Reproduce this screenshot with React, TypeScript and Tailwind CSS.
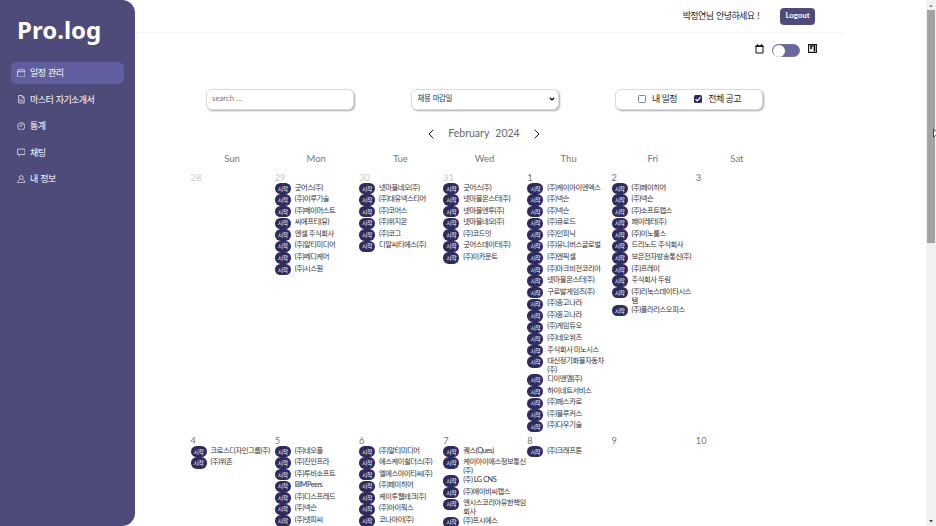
import React from "react";

const KR = "font-['Lato','Noto_Sans_CJK_KR',sans-serif]";

type Day = { date: string; muted?: boolean; events: string[] };

const weeks: Day[][] = [
  [
    { date: "28", muted: true, events: [] },
    { date: "29", muted: true, events: ["굿어스(주)", "(주)이루기술", "(주)메이머스트", "씨에프티(유)", "엔셀 주식회사", "(주)알티미디어", "(주)메디케어", "(주)시스원"] },
    { date: "30", muted: true, events: ["넷마블네오(주)", "(주)대유넥스티어", "(주)코어스", "(주)위지온", "(주)코그", "디알씨티에스(주)"] },
    { date: "31", muted: true, events: ["굿어스(주)", "넷마블몬스터(주)", "넷마블엔투(주)", "넷마블네오(주)", "(주)코드잇", "굿어스데이터(주)", "(주)이카운트"] },
    {
      date: "1",
      events: ["(주)케이아이엔엑스", "(주)넥슨", "(주)넥슨", "(주)큐로드", "(주)인피닉", "(주)유니버스글로벌", "(주)엔픽셀", "(주)마크비전코리아", "넷마블몬스터(주)", "구로발게임즈(주)", "(주)중고나라", "(주)중고나라", "(주)게임듀오", "(주)네오위즈", "주식회사 미노시스", "대신정기화물자동차\n(주)", "디이앤엠(주)", "하이네트서비스", "(주)패스카로", "(주)블루커스", "(주)다우기술"],
    },
    {
      date: "2",
      events: ["(주)페이히어", "(주)넥슨", "(주)소프트랩스", "페이레터(주)", "(주)이노룰스", "드리노드 주식회사", "보은전자방송통신(주)", "(주)프레이", "주식회사 두림", "(주)리눅스데이타시스\n템", "(주)폴라리스오피스"],
    },
    { date: "3", events: [] },
  ],
  [
    { date: "4", events: ["크로스디자인그룹(주)", "(주)위존"] },
    { date: "5", events: ["(주)네오플", "(주)진인프라", "(주)투비소프트", "BIMPeers", "(주)디스프레드", "(주)넥슨", "(주)넷피씨"] },
    { date: "6", events: ["(주)알티미디어", "에스케이쉴더스(주)", "엘에스아이티씨(주)", "(주)페이히어", "케이투웹테크(주)", "(주)아이웍스", "코나아이(주)"] },
    { date: "7", events: ["퀘스(Ques)", "케이아이에스정보통신\n(주)", "(주) LG CNS", "(주)에이비씨랩스", "앤시스코리아유한책임\n회사", "(주)프시에스"] },
    { date: "8", events: ["(주)크래프톤"] },
    { date: "9", events: [] },
    { date: "10", events: [] },
  ],
];

const iconProps = {
  viewBox: "0 0 16 16",
  fill: "none",
  stroke: "currentColor",
  strokeWidth: 1.3,
  className: "size-[8.500px] shrink-0",
};

const menu = [
  { label: "일정 관리", icon: <svg {...iconProps}><rect x="1" y="1.5" width="14" height="13.500" rx="2" /><path d="M1 5h14" /></svg> },
  { label: "마스터 자기소개서", icon: <svg {...iconProps}><path d="M9.5 1H3v14h10.5V5zM9.5 1v4h4M5.8 12V7M8.3 12V9M10.8 12v-2" /></svg> },
  { label: "통계", icon: <svg {...iconProps}><circle cx="8" cy="8" r="6.8" /><path d="M8 3v5l4.500-4.500M8 8H4" strokeWidth="1" /></svg> },
  { label: "채팅", icon: <svg {...iconProps}><path d="M1.2 2h13.6v10.2H7l-3 2.8v-2.8H1.2z" /></svg> },
  { label: "내 정보", icon: <svg {...iconProps}><circle cx="8" cy="4.8" r="3.6" /><path d="M4.8 8.5C2.5 9.8 1.6 12 1.5 14.5h13c-.1-2.500-1-4.700-3.300-6" /></svg> },
];

function Sidebar() {
  return (
    <aside className="h-full w-[135px] shrink-0 rounded-r-[13px] bg-[#4e4a79] px-[11px] pt-[16px] text-white">
      <div className="h-[46px] pl-[6px] font-['Noto_Sans','Open_Sans',sans-serif] text-[24px] leading-[28px] font-bold">Pro.log</div>
      <nav className="flex flex-col gap-[4.5px]">
        {menu.map((m, i) => (
          <div key={m.label} className={`flex h-[22px] items-center gap-[5px] rounded-[6px] pl-[5.500px] text-[9px] tracking-[-0.55px] whitespace-nowrap ${i === 0 ? "bg-[#605e9e]" : ""}`}>
            {m.icon}
            <span className="font-['Noto_Sans_CJK_KR',sans-serif] [word-spacing:1px]">{m.label}</span>
          </div>
        ))}
      </nav>
    </aside>
  );
}

function EventRow({ text }: { text: string }) {
  const two = text.includes("\n");
  return (
    <li className={`flex items-start gap-[4px] ${two ? "h-[18px]" : "h-[11.58px]"}`}>
      <span className="mt-[0.3px] flex h-[11.400px] w-4 shrink-0 items-center justify-center rounded-[5.700px] bg-[#302b5e] text-[5.800px] leading-none tracking-[-0.4px] text-white">시작</span>
      <span className="text-[7.300px] leading-[9px] tracking-[-0.45px] whitespace-pre text-[#303030]">{text}</span>
    </li>
  );
}

function Check({ on }: { on?: boolean }) {
  return (
    <span className={`flex size-2 items-center justify-center rounded-[1.500px] ${on ? "bg-[#302b5e]" : "border border-[#858585] bg-white"}`}>
      {on && (
        <svg viewBox="0 0 8 8" className="size-2" fill="none" stroke="#fff" strokeWidth="1.2"><path d="M1.600 4.200 3.300 5.800 6.500 2.200" /></svg>
      )}
    </span>
  );
}

const box = "flex h-[21px] items-center rounded-[6px] border border-[#dcdcdc] bg-white shadow-[1px_1px_2px_rgba(0,0,0,0.35)]";

export default function App() {
  return (
    <div className={`flex h-[526px] w-[936px] overflow-hidden bg-white ${KR}`}>
      <Sidebar />
      <main className="h-full min-w-0 flex-1 overflow-hidden">
        <header className="flex h-[33px] w-[707px] items-center justify-end border-b border-[#f3f3f3] pr-[27px]">
          <span className="mr-[21px] text-[9px] tracking-[-0.6px] text-[#222] [word-spacing:1px]">박정연님 안녕하세요 !</span>
          <span className="flex h-[17px] w-[35px] items-center justify-center rounded-[4px] bg-[#4e4a79] font-['Lato',sans-serif] text-[7.800px] font-bold text-white">Logout</span>
        </header>
        <div className="flex h-[55.500px] w-[683px] items-start justify-end pt-[10px]">
          <svg viewBox="0 0 9 10" className="mt-[0.5px] mr-[8px] h-[10px] w-[9px]" fill="none" stroke="#111"><path d="M1 2h7v7H1z" strokeWidth="1" /><path d="M.5 2.300h8M2.500 .3v1.500M6.500 .3v1.500" strokeWidth="1.400" /></svg>
          <span className="mt-px flex h-[13px] w-7 items-center rounded-full border border-[#77749f] bg-[#6a679c]">
            <span className="size-[12px] rounded-full bg-white" />
          </span>
          <svg viewBox="0 0 9 9" className="mt-[1px] mr-[1px] ml-[8px] size-[9px]" fill="none" stroke="#111"><path d="M.6.6h7.800v7.800H.6z" strokeWidth="1.100" /><path d="M3 1.200v4M6.400 1.200v6" strokeWidth="1.700" /><path d="M4.700 1v2" strokeWidth="1" /></svg>
        </div>
        <div className="ml-[71px] flex w-[557px] justify-between">
          <div className={`${box} w-[148px] pl-[5px] font-['Lato',sans-serif] text-[7.800px] text-[#777]`}>search ...</div>
          <div className={`${box} w-[148px] justify-between pr-[3px] pl-[6px] text-[7.500px] tracking-[-0.5px] text-[#333] [word-spacing:1px]`}>
            채용 마감일
            <svg viewBox="0 0 6 4" className="h-1 w-1.5" fill="none" stroke="#000" strokeWidth="1.300"><path d="m.8.7 2.200 2.200L5.200.7" /></svg>
          </div>
          <div className={`${box} w-[148px] pl-[22px] text-[9px] tracking-[-0.5px] text-[#222]`}>
            <Check />
            <span className="mr-[17px] ml-[6px]">내 일정</span>
            <Check on />
            <span className="ml-[6px]">전체 공고</span>
          </div>
        </div>
        <div className="mt-[16.500px] ml-[292.500px] flex h-[16px] w-[113px] items-center justify-between font-['Lato',sans-serif] text-[10.500px] text-[#666]">
          <svg viewBox="0 0 6 10" className="h-[10px] w-[6px]" fill="none" stroke="#111"><path d="M5.300.8 1 5l4.300 4.200" /></svg>
          <span className="flex gap-[6px]"><span>February</span><span>2024</span></span>
          <svg viewBox="0 0 6 10" className="h-[10px] w-[6px]" fill="none" stroke="#111"><path d="M.7.8 5 5 .7 9.200" /></svg>
        </div>
        <div className="mt-[9px] ml-[55px] grid h-[20px] w-[589px] grid-cols-7 text-center font-['Lato',sans-serif] text-[9.500px] leading-[16px] text-[#777]">
          {["Sun", "Mon", "Tue", "Wed", "Thu", "Fri", "Sat"].map((d) => <span key={d}>{d}</span>)}
        </div>
        {weeks.map((week, i) => (
          <div key={i} className="ml-[55px] grid h-[263px] w-[589.500px] grid-cols-7">
            {week.map((day) => (
              <div key={day.date} className="min-w-0 pt-[0.500px] pl-[0.500px]">
                <div className={`h-[11px] font-['Lato',sans-serif] text-[9.300px] leading-[11px] ${day.muted ? "text-[#cacaca]" : "text-[#777]"}`}>{day.date}</div>
                <ul>{day.events.map((e, n) => <EventRow key={n} text={e} />)}</ul>
              </div>
            ))}
          </div>
        ))}
      </main>
      <div className="relative flex h-full w-[10px] shrink-0 flex-col items-center bg-[#f1f1f1]">
        <svg viewBox="0 0 10 10" className="size-[10px] shrink-0"><path d="M3 7h4L5 4.500z" fill="#888" /></svg>
        <div className="h-[233px] w-2 bg-[#a3a3a1]" />
        <svg viewBox="0 0 10 10" className="mt-auto size-[10px] shrink-0"><path d="M3 4h4L5 6.500z" fill="#444" /></svg>
        <svg viewBox="0 0 3 9" className="absolute top-[129px] right-0 h-[9px] w-[3px]"><path d="M.5.5v7.500l2-1.500H4V3z" fill="#fff" stroke="#222" strokeWidth=".8" /></svg>
      </div>
    </div>
  );
}
